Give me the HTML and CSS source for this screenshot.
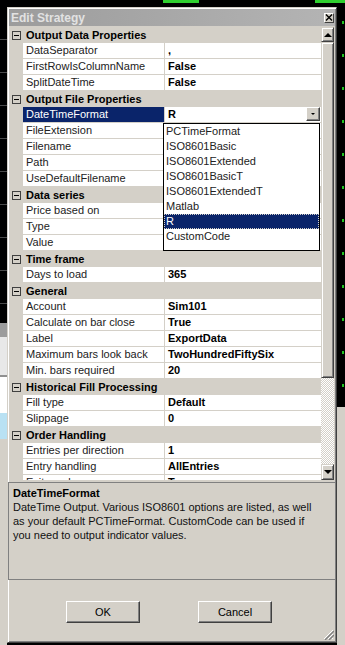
FILE: index.html
```html
<!DOCTYPE html>
<html lang="en">
<head>
  <meta charset="UTF-8">
  <title>Edit Strategy</title>
  <link rel="stylesheet" href="styles.css">
</head>
<body>

<div class="desk">
  <div class="top">
    <span class="tick t1"></span>
    <span class="tick t2"></span>
    <span class="top-line"></span>
  </div>
  <div class="middle">
    <div class="left-strip">
      <div class="chart"></div>
      <div class="panel-a"></div>
      <div class="panel-b"></div>
      <div class="panel-c"></div>
      <div class="panel-d"></div>
      <div class="panel-e"></div>
    </div>
    <div class="under"></div>
    <div class="right-strip">
      <div class="chart-r"></div>
      <div class="panel-r"></div>
    </div>
  </div>

  <div class="window">
    <div class="titlebar">
      <span>Edit Strategy</span>
      <span class="close">
        <svg width="8" height="7" viewBox="0 0 8 7"><path d="M1 0.5 L7 6.5 M7 0.5 L1 6.5" stroke="#000" stroke-width="1.4"/></svg>
      </span>
    </div>

    <div class="grid">
      <div class="rows">
        <div class="cat"><span class="box"></span>Output Data Properties</div>
        <div class="prop"><span class="name">DataSeparator</span><span class="val">,</span></div>
        <div class="prop"><span class="name">FirstRowIsColumnName</span><span class="val">False</span></div>
        <div class="prop"><span class="name">SplitDateTime</span><span class="val">False</span></div>
        <div class="cat"><span class="box"></span>Output File Properties</div>
        <div class="prop selected">
          <span class="name">DateTimeFormat</span>
          <span class="val">R
            <span class="drop-btn"><span class="arrow-sm"></span></span>
            <span class="list">
              <span class="item">PCTimeFormat</span>
              <span class="item">ISO8601Basic</span>
              <span class="item">ISO8601Extended</span>
              <span class="item">ISO8601BasicT</span>
              <span class="item">ISO8601ExtendedT</span>
              <span class="item">Matlab</span>
              <span class="item active">R</span>
              <span class="item">CustomCode</span>
            </span>
          </span>
        </div>
        <div class="prop"><span class="name">FileExtension</span><span class="val"></span></div>
        <div class="prop"><span class="name">Filename</span><span class="val"></span></div>
        <div class="prop"><span class="name">Path</span><span class="val"></span></div>
        <div class="prop"><span class="name">UseDefaultFilename</span><span class="val"></span></div>
        <div class="cat"><span class="box"></span>Data series</div>
        <div class="prop"><span class="name">Price based on</span><span class="val"></span></div>
        <div class="prop"><span class="name">Type</span><span class="val"></span></div>
        <div class="prop"><span class="name">Value</span><span class="val"></span></div>
        <div class="cat"><span class="box"></span>Time frame</div>
        <div class="prop"><span class="name">Days to load</span><span class="val">365</span></div>
        <div class="cat"><span class="box"></span>General</div>
        <div class="prop"><span class="name">Account</span><span class="val">Sim101</span></div>
        <div class="prop"><span class="name">Calculate on bar close</span><span class="val">True</span></div>
        <div class="prop"><span class="name">Label</span><span class="val">ExportData</span></div>
        <div class="prop"><span class="name">Maximum bars look back</span><span class="val">TwoHundredFiftySix</span></div>
        <div class="prop"><span class="name">Min. bars required</span><span class="val">20</span></div>
        <div class="cat"><span class="box"></span>Historical Fill Processing</div>
        <div class="prop"><span class="name">Fill type</span><span class="val">Default</span></div>
        <div class="prop"><span class="name">Slippage</span><span class="val">0</span></div>
        <div class="cat"><span class="box"></span>Order Handling</div>
        <div class="prop"><span class="name">Entries per direction</span><span class="val">1</span></div>
        <div class="prop"><span class="name">Entry handling</span><span class="val">AllEntries</span></div>
        <div class="prop"><span class="name">Exit on close</span><span class="val">True</span></div>
      </div>

      <div class="vscroll">
        <div class="sb-btn up"><span class="arrow-up"></span></div>
        <div class="thumb"></div>
        <div class="track"></div>
        <div class="sb-btn down"><span class="arrow-down"></span></div>
      </div>
    </div>

    <div class="desc">
      <div class="desc-title">DateTimeFormat</div>
      <p>DateTime Output. Various ISO8601 options are listed, as well<br>
      as your default PCTimeFormat. CustomCode can be used if<br>
      you need to output indicator values.</p>
    </div>

    <div class="buttons">
      <button class="btn">OK</button>
      <button class="btn">Cancel</button>
    </div>

    <svg class="grip" width="11" height="11" viewBox="0 0 11 11">
      <path d="M10 1 L1 10 M10 5 L5 10 M10 9 L9 10" stroke="#fff" stroke-width="1"/>
      <path d="M11 2 L2 11 M11 6 L6 11" stroke="#808080" stroke-width="1.4"/>
    </svg>
  </div>
</div>

</body>
</html>
```

FILE: styles.css
```css
body {
  margin: 0;
  background-color: #000;
  font-family: "Liberation Sans", Arial, sans-serif;
  font-size: 11px;
  color: #000;
  overflow: hidden;
}

.desk {
  position: relative;
  width: 345px;
  height: 645px;
  display: flex;
  flex-direction: column;
}

/* what shows behind the dialog */
.top {
  height: 7px;
  display: flex;
  align-items: flex-start;
  position: relative;
}

.top-line {
  flex: 1;
  margin-top: 4px;
  margin-left: 8px;
  border-top: 1px solid #5a5a5a;
}

.tick {
  height: 3px;
  background: #2fd02f;
}

.t1 {
  width: 36px;
  margin-left: 163px;
}

.t2 {
  width: 30px;
  margin-left: 108px;
  order: 2;
}

.middle {
  flex: 1;
  display: flex;
}

.left-strip {
  width: 7px;
  display: flex;
  flex-direction: column;
}

.chart {
  height: 316px;
  background: repeating-linear-gradient(to bottom, #000 0 32px, #4a4a4a 32px 33px);
}

.panel-a {
  height: 14px;
  background: #9c9c9c;
}

.panel-b {
  height: 38px;
  background: #e8e8e8;
  border-bottom: 2px solid #909090;
}

.panel-c {
  height: 36px;
  background: #fff;
}

.panel-d {
  height: 26px;
  background: #b9e1f3;
}

.panel-e {
  flex: 1;
  background: #d4d0c8;
}

.under {
  flex: 1;
}

.right-strip {
  width: 8px;
  display: flex;
  flex-direction: column;
}

.chart-r {
  height: 400px;
  background:
    repeating-linear-gradient(to bottom, transparent 0 14px, #22c322 14px 17px, transparent 17px 33px) 5px 0 / 2px 100% no-repeat,
    #000;
}

.panel-r {
  flex: 1;
  background: #d4d0c8;
}

/* the dialog window */
.window {
  position: absolute;
  left: 7px;
  top: 7px;
  width: 330px;
  height: 636px;
  box-sizing: border-box;
  background: #d4d0c8;
  border: 1px solid;
  border-color: #d4d0c8 #404040 #404040 #d4d0c8;
  box-shadow: inset 1px 1px #fff, inset -1px -1px #808080;
  padding: 1px;
}

.titlebar {
  height: 17px;
  display: flex;
  align-items: center;
  justify-content: space-between;
  padding: 0 1px 0 2px;
  background: linear-gradient(to right, #9c9c9c, #b4b4b4);
  color: #e2e2e2;
  font-size: 12px;
  font-weight: bold;
}

.close {
  width: 8px;
  height: 8px;
  display: flex;
  align-items: center;
  justify-content: center;
  background: #d4d0c8;
  border: 1px solid;
  border-color: #fff #404040 #404040 #fff;
}

.grid {
  height: 453px;
  margin-top: 1px;
  display: flex;
}

.rows {
  flex: 1;
  overflow: hidden;
}

.cat {
  height: 16px;
  display: flex;
  align-items: center;
  font-weight: bold;
  line-height: 16px;
}

.box {
  width: 7px;
  height: 7px;
  margin: 0 5px 0 3px;
  border: 1px solid #404040;
  position: relative;
}

.box::after {
  content: "";
  position: absolute;
  left: 1px;
  right: 1px;
  top: 3px;
  height: 1px;
  background: #000;
}

.prop {
  height: 16px;
  display: grid;
  grid-template-columns: 142px 1fr;
  margin-left: 14px;
  line-height: 15px;
}

.name,
.val {
  background: #fff;
  border-bottom: 1px solid #d4d0c8;
  padding-left: 3px;
  white-space: nowrap;
  overflow: hidden;
}

.name {
  border-right: 1px solid #d4d0c8;
  color: #222;
}

.val {
  font-weight: bold;
  position: relative;
  overflow: visible;
}

.selected .name {
  background: #0a246a;
  color: #fff;
}

.drop-btn {
  position: absolute;
  right: 1px;
  top: 0;
  width: 12px;
  height: 12px;
  background: #d4d0c8;
  border: 1px solid;
  border-color: #fff #404040 #404040 #fff;
  box-shadow: inset -1px -1px #808080;
  display: flex;
  align-items: center;
  justify-content: center;
}

.arrow-sm {
  width: 0;
  height: 0;
  border-left: 2px solid transparent;
  border-right: 2px solid transparent;
  border-top: 2px solid #000;
}

.list {
  position: absolute;
  left: -2px;
  top: 16px;
  width: 157px;
  height: 128px;
  box-sizing: border-box;
  background: #fff;
  border: 1px solid #000;
  font-weight: normal;
  display: flex;
  flex-direction: column;
  z-index: 2;
}

.item {
  height: 15px;
  line-height: 15px;
  padding-left: 2px;
  color: #222;
}

.item.active {
  background: #0a246a;
  color: #fff;
  outline: 1px dotted #d4d0c8;
  outline-offset: -1px;
}

/* scrollbar */
.vscroll {
  width: 13px;
  margin-right: 1px;
  display: flex;
  flex-direction: column;
}

.sb-btn,
.thumb {
  box-sizing: border-box;
  background: #d4d0c8;
  border: 1px solid;
  border-color: #d4d0c8 #404040 #404040 #d4d0c8;
  box-shadow: inset 1px 1px #fff, inset -1px -1px #808080;
}

.sb-btn {
  height: 15px;
  display: flex;
  align-items: center;
  justify-content: center;
}

.sb-btn.down {
  height: 16px;
}

.thumb {
  height: 336px;
}

.track {
  flex: 1;
  background: repeating-conic-gradient(#fff 0 25%, #d4d0c8 0 50%) 0 0 / 2px 2px;
}

.arrow-up,
.arrow-down {
  width: 0;
  height: 0;
  border-left: 4px solid transparent;
  border-right: 4px solid transparent;
}

.arrow-up {
  border-bottom: 4px solid #000;
}

.arrow-down {
  border-top: 4px solid #000;
}

/* help panel */
.desc {
  height: 98px;
  margin: 2px -1px 0;
  box-sizing: border-box;
  border: 1px solid #808080;
  padding: 3px 4px;
}

.desc-title {
  font-weight: bold;
  line-height: 14px;
}

.desc p {
  margin: 0;
  line-height: 14px;
  color: #111;
}

.buttons {
  margin-top: 21px;
  padding-left: 57px;
  display: flex;
  gap: 58px;
}

.btn {
  width: 74px;
  height: 22px;
  font-family: "Liberation Sans", Arial, sans-serif;
  font-size: 11px;
  color: #000;
  background: #d4d0c8;
  border: 1px solid;
  border-color: #fff #404040 #404040 #fff;
  box-shadow: inset -1px -1px #808080;
  padding: 0;
}

.grip {
  position: absolute;
  right: 2px;
  bottom: 2px;
}
```
